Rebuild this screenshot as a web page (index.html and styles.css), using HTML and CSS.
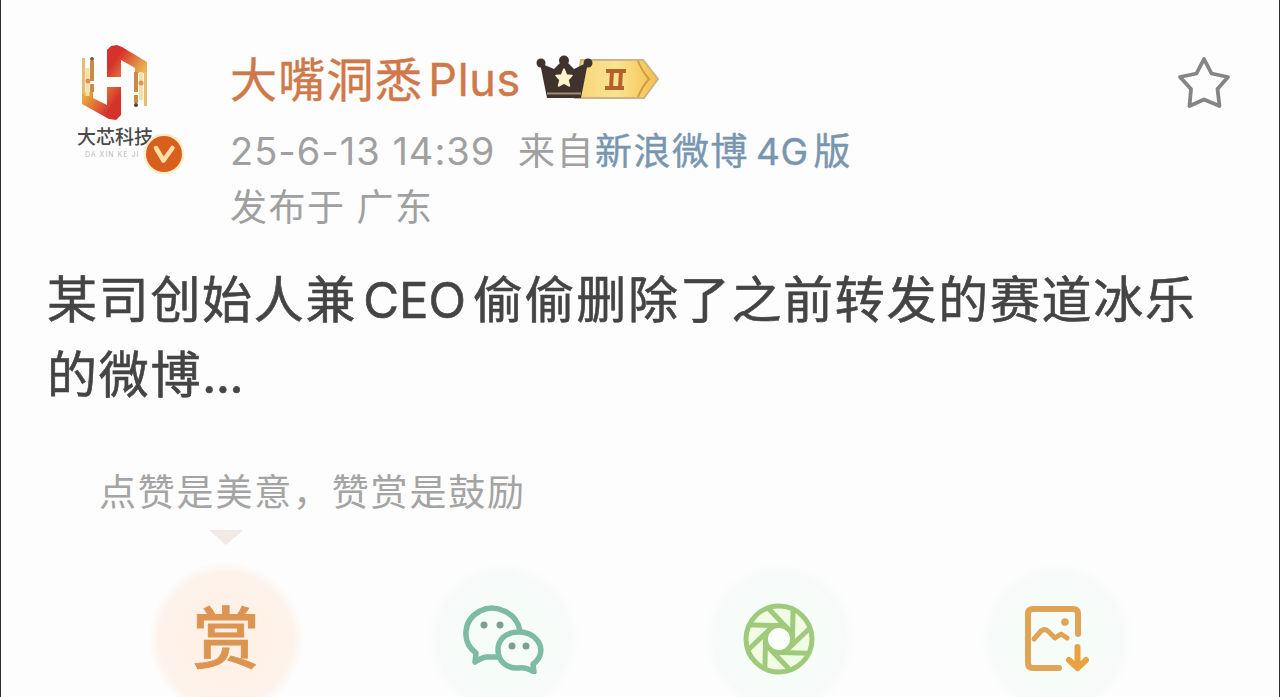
FILE: index.html
```
<!DOCTYPE html>
<html lang="zh-CN">

<head>
    <meta charset="UTF-8">
    <meta name="viewport" content="width=device-width, initial-scale=1.0">
    <title>微博正文</title>
    <link rel="stylesheet" href="styles.css">
</head>

<body>

    <div class="container">
        <div class="header">
            <div class="avatar">
                <svg class="logo" width="70" height="76" viewBox="0 0 70 76">
                    <defs>
                        <linearGradient id="right" x1="0" y1="0" x2="1" y2="0.6">
                            <stop offset="0.35" stop-color="#d5322c"/>
                            <stop offset="1" stop-color="#e8b04e"/>
                        </linearGradient>
                        <linearGradient id="left" x1="1" y1="1" x2="0" y2="0.4">
                            <stop offset="0.35" stop-color="#d5322c"/>
                            <stop offset="1" stop-color="#e8a83e"/>
                        </linearGradient>
                    </defs>
                    <path d="M27 33V6L31 2L37 1L42 3L67 18V29H55V24L41 16V33Z" fill="url(#right)"/>
                    <path d="M41 43V71L36 76L29 75L2 60V48H13V54L27 61V43Z" fill="url(#left)"/>
                    <path d="M3.500 14V50M65.500 28V62" stroke="#e3bd70" stroke-width="3"/>
                    <path d="M12 17V51M56 28V61" stroke="#c98a4a" stroke-width="4" stroke-dasharray="20 3 8 3"/>
                    <path d="M7.500 24V52M61 28V56" stroke="#f6dfa4" stroke-width="4"/>
                    <circle cx="12" cy="15" r="2" fill="#715c4a"/>
                    <circle cx="56" cy="61" r="2" fill="#52423a"/>
                    <circle cx="8" cy="37" r="2.500" fill="#ee8b51"/>
                    <circle cx="61" cy="39" r="2.500" fill="#ee8b51"/>
                </svg>
                <div class="logo-text">大芯科技</div>
                <div class="logo-sub">DA XIN KE JI</div>
                <svg class="verified" width="42" height="42" viewBox="0 0 42 42">
                    <circle cx="21" cy="21" r="20.500" fill="#ffedcb"/>
                    <circle cx="21" cy="21" r="18" fill="#d9601c"/>
                    <path d="M13 15L20.500 27.500L29.500 15" fill="none" stroke="#ffe0a8" stroke-width="4.500" stroke-linecap="round" stroke-linejoin="round"/>
                </svg>
            </div>
            <div class="info">
                <div class="name-row">
                    <span class="name">大嘴洞悉</span>
                    <span class="name-en">Plus</span>
                    <svg class="vip" width="126" height="48" viewBox="0 0 126 48">
                        <defs>
                            <linearGradient id="gold" x1="0" y1="0" x2="1" y2="0">
                                <stop offset="0" stop-color="#f5d478"/>
                                <stop offset="0.5" stop-color="#fce391"/>
                                <stop offset="1" stop-color="#f3c04e"/>
                            </linearGradient>
                        </defs>
                        <path d="M46 5H108L123 24L109 43H40Z" fill="url(#gold)" stroke="#cfb384" stroke-width="2"/>
                        <path d="M103 6Q107 16 114 24Q107 32 103 42" fill="none" stroke="#d39a40" stroke-width="2"/>
                        <path d="M5 8L19 14L27 6L31 6L39 14L53 7L46 43H12Z" fill="#40332e"/>
                        <circle cx="6" cy="8" r="4.500" fill="#40332e"/>
                        <circle cx="29" cy="5.500" r="5" fill="#40332e"/>
                        <circle cx="53" cy="8" r="4.500" fill="#40332e"/>
                        <path d="M12 38.500H46" stroke="#a08c74" stroke-width="2"/>
                        <path d="M29 14L31.500 20L37 20.500L33 25L34.500 31L29 28L23.500 31L25 25L21 20.500L26.500 20Z" fill="#fff3c9" stroke="#fff3c9" stroke-width="1.500" stroke-linejoin="round"/>
                        <path d="M71 16H91M70 33H89M77 16L76 33M86 16L85 33" fill="none" stroke="#b5602a" stroke-width="4"/>
                    </svg>
                </div>
                <div class="meta">
                    <span class="time">25-6-13 14:39</span>
                    <span class="from">来自</span>
                    <a class="source">新浪微博<span class="latin">4G</span>版</a>
                </div>
                <div class="meta location"><span>发布于</span><span>广东</span></div>
            </div>
            <svg class="star" width="54" height="54" viewBox="0 0 54 54">
                <path d="M27 4L34.500 18.500L51 22L40.500 34L42.500 51L27 44.500L12.500 51L14 34L3 22L19.500 18.500Z" fill="none" stroke="#858585" stroke-width="3.800" stroke-linejoin="round"/>
            </svg>
        </div>

        <div class="content">
            <p>某司创始人兼<span class="latin">CEO</span>偷偷删除了之前转发的赛道冰乐</p>
            <p>的微博<span class="dots">...</span></p>
        </div>

        <div class="reward">
            <p class="reward-text">点赞是美意，赞赏是鼓励</p>
            <div class="arrow"></div>
        </div>

        <div class="actions">
            <div class="action action-reward">
                <span class="shang">赏</span>
            </div>
            <div class="action">
                <svg width="82" height="70" viewBox="0 0 82 70">
                    <g fill="none" stroke="#7dbba5" stroke-width="5.500" stroke-linejoin="round">
                        <path d="M36 53H25Q21 53 13 58L14 49C-1 38 1 16 18 7C34 -1 55 9 58 27"/>
                        <path d="M57 28C43 28 36 36 36 46C36 58 46 65 57 64Q64 63 72 68L71 60C80 54 81 43 75 36C71 31 65 28 57 28Z"/>
                    </g>
                    <g fill="#7c9f92">
                        <circle cx="22" cy="21" r="3.500"/>
                        <circle cx="38" cy="21" r="3.500"/>
                        <circle cx="50" cy="42" r="3.500"/>
                        <circle cx="64" cy="42" r="3.500"/>
                    </g>
                </svg>
            </div>
            <div class="action">
                <svg class="aperture" width="74" height="74" viewBox="0 0 74 74">
                    <circle cx="37" cy="37" r="32.500" fill="#f0fde4"/>
                    <circle cx="37" cy="37" r="12.500" fill="#fbfffa"/>
                    <g fill="none" stroke="#9fca7b" stroke-width="5">
                        <circle cx="37" cy="37" r="33"/>
                        <circle cx="37" cy="37" r="13.500"/>
                        <path d="M26 6L46 27"/>
                        <path d="M26 6L46 27" transform="rotate(45 37 37)"/>
                        <path d="M26 6L46 27" transform="rotate(90 37 37)"/>
                        <path d="M26 6L46 27" transform="rotate(135 37 37)"/>
                        <path d="M26 6L46 27" transform="rotate(180 37 37)"/>
                        <path d="M26 6L46 27" transform="rotate(225 37 37)"/>
                        <path d="M26 6L46 27" transform="rotate(270 37 37)"/>
                        <path d="M26 6L46 27" transform="rotate(315 37 37)"/>
                    </g>
                </svg>
            </div>
            <div class="action">
                <svg width="66" height="68" viewBox="0 0 66 68">
                    <g fill="none" stroke="#e0a455" stroke-width="6" stroke-linecap="round" stroke-linejoin="round">
                        <path d="M35 63H9Q4 63 4 58V9Q4 4 9 4H49Q54 4 54 9V29"/>
                        <path d="M10 34L17 26Q21 23 25 27L31 33L37 29L43 33" stroke-width="5"/>
                        <path d="M53.500 42V62M45 55L53.500 63L62 55" stroke="#eaa241"/>
                    </g>
                    <circle cx="41" cy="17" r="3.800" fill="#e0a455"/>
                </svg>
            </div>
        </div>
    </div>

</body>

</html>
```
FILE: styles.css
```
* {
    padding: 0;
    margin: 0;
    box-sizing: border-box;
}

body {
    height: 100vh;
    overflow: hidden;
    background-color: #fdfdfd;
    font-family: Inter, "Noto Sans CJK SC", sans-serif;
}

.container {
    height: 697px;
    border-left: 1px solid #2e2e2e;
    border-right: 1px solid #2e2e2e;
    overflow: hidden;
}

.header {
    display: flex;
    height: 263px;
    padding: 44px 48px 0 71px;
}

.avatar {
    position: relative;
    width: 158px;
    height: 140px;
}

.logo {
    display: block;
    margin-left: 8px;
}

.logo-text {
    margin-top: 5px;
    margin-left: 5px;
    font-size: 19px;
    font-weight: 500;
    line-height: 25px;
    color: #4a4a4a;
    white-space: nowrap;
}

.logo-sub {
    margin-left: 13px;
    font-size: 7px;
    line-height: 9px;
    letter-spacing: 1px;
    color: #bbb;
}

.verified {
    position: absolute;
    left: 71px;
    top: 89px;
}

.info {
    flex: 1;
}

.name-row {
    display: flex;
    height: 72px;
    line-height: 72px;
    color: #cf7849;
    -webkit-text-stroke: 0.4px #cf7849;
}

.name {
    font-size: 47px;
    letter-spacing: 1.3px;
}

.name-en {
    margin-left: 5px;
    width: 107px;
    font-size: 45px;
    letter-spacing: 0.7px;
}

.vip {
    margin-top: 11px;
}

.meta {
    display: flex;
    height: 56px;
    line-height: 71px;
    font-size: 37px;
    letter-spacing: 1.5px;
    color: #a0a0a0;
}

.time {
    width: 288px;
    font-size: 38px;
    letter-spacing: 1px;
}

.source {
    color: #7896b0;
    -webkit-text-stroke: 0.4px #7896b0;
}

.source .latin {
    margin: 0 5px 0 7px;
    letter-spacing: 0.5px;
}

.location {
    gap: 11px;
}

.star {
    margin-top: 11px;
}

.content {
    height: 196px;
    padding-left: 46px;
    font-size: 50px;
    letter-spacing: 1.7px;
    color: #444;
    -webkit-text-stroke: 0.6px #444;
}

.content p {
    height: 75px;
    line-height: 75px;
    white-space: nowrap;
}

.content .latin {
    margin: 0 7px 0 6px;
    font-size: 49px;
    letter-spacing: 0;
}

.content .dots {
    letter-spacing: -0.8px;
}

.reward {
    height: 103px;
    padding-left: 98px;
}

.reward-text {
    height: 71px;
    line-height: 67px;
    font-size: 37px;
    letter-spacing: 1.8px;
    color: #a4a4a4;
}

.arrow {
    width: 0;
    margin-left: 110px;
    border-left: 17px solid transparent;
    border-right: 17px solid transparent;
    border-top: 15px solid #f0e9e6;
}

.actions {
    display: flex;
    gap: 123px;
    padding-left: 148px;
}

.action {
    display: flex;
    justify-content: center;
    align-items: center;
    width: 154px;
    height: 154px;
    border-radius: 50%;
    background: radial-gradient(circle closest-side, #f6fdf9 40%, #f8faf9 85%, #fdfdfd 100%);
}

.action-reward {
    background: radial-gradient(circle closest-side, #fff1e7 50%, #fdf3ec 88%, #fdfdfd 100%);
}

.aperture {
    margin-right: 3px;
}

.shang {
    font-size: 67px;
    font-weight: 500;
    line-height: 66px;
    color: #dc9450;
    -webkit-text-stroke: 0.8px #dc9450;
}
```
